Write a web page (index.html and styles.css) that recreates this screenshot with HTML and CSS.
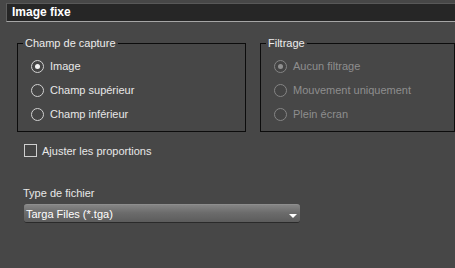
FILE: index.html
```html
<!DOCTYPE html>
<html lang="fr">
<head>
    <meta charset="UTF-8">
    <title>Image fixe</title>
    <link rel="stylesheet" href="styles.css">
</head>
<body>
    <div class="header">Image fixe</div>

    <div class="groups">
        <fieldset class="group group-capture">
            <legend>Champ de capture</legend>
            <div class="option"><span class="radio checked"></span>Image</div>
            <div class="option"><span class="radio"></span>Champ supérieur</div>
            <div class="option"><span class="radio"></span>Champ inférieur</div>
        </fieldset>

        <fieldset class="group group-filter">
            <legend>Filtrage</legend>
            <div class="option disabled"><span class="radio checked"></span>Aucun filtrage</div>
            <div class="option disabled"><span class="radio"></span>Mouvement uniquement</div>
            <div class="option disabled"><span class="radio"></span>Plein écran</div>
        </fieldset>
    </div>

    <div class="check-row"><span class="checkbox"></span>Ajuster les proportions</div>

    <div class="field-label">Type de fichier</div>
    <div class="select">
        <span class="select-text">Targa Files (*.tga)</span>
        <span class="select-arrow"></span>
    </div>
</body>
</html>
```

FILE: styles.css
```css
* {
    box-sizing: border-box;
}

body {
    margin: 0;
    background: #474747;
    font-family: "Liberation Sans", Arial, sans-serif;
    font-size: 11px;
    color: #e8e8e8;
    height: 268px;
    overflow: hidden;
}

.header {
    margin: 3px 0 0 6px;
    height: 19px;
    padding-left: 5px;
    background: #262626;
    border-top: 1px solid #585858;
    border-left: 1px solid #5e5e5e;
    border-bottom: 1px solid #a6a6a6;
    color: #fff;
    font-weight: bold;
    font-size: 12px;
    line-height: 17px;
}

.groups {
    display: flex;
    margin-top: 15px;
    padding-left: 17px;
}

.group {
    margin: 0;
    padding: 4px 5px 5px 5px;
    border: 1px solid #0c0c0c;
    min-width: 0;
}

.group-capture {
    width: 229px;
    margin-right: 14px;
}

.group-filter {
    flex: 1;
}

.group legend {
    padding: 0 2px;
    line-height: 13px;
    color: #ececec;
}

.option {
    display: flex;
    align-items: center;
    height: 24px;
    padding-left: 8px;
}

.radio {
    width: 13px;
    height: 13px;
    border: 1px solid #d2d2d2;
    border-radius: 50%;
    margin-right: 6px;
    display: flex;
    align-items: center;
    justify-content: center;
    background: #444;
}

.radio.checked::after {
    content: "";
    width: 5px;
    height: 5px;
    border-radius: 50%;
    background: #f2f2f2;
}

.option.disabled {
    color: #8e8e8e;
}

.option.disabled .radio {
    border-color: #858585;
}

.option.disabled .radio.checked::after {
    background: #909090;
}

.check-row {
    display: flex;
    align-items: center;
    height: 13px;
    margin-top: 12px;
    padding-left: 24px;
}

.checkbox {
    width: 13px;
    height: 13px;
    border: 1px solid #cfcfcf;
    background: #444;
    margin-right: 5px;
}

.field-label {
    margin-top: 30px;
    padding-left: 23px;
    line-height: 13px;
}

.select {
    display: flex;
    align-items: center;
    justify-content: space-between;
    width: 276px;
    height: 19px;
    margin: 4px 0 0 24px;
    padding: 0 3px 0 2px;
    border-radius: 3px;
    background: linear-gradient(#858585, #6c6c6c 45%, #5c5c5c);
    border-top: 1px solid #8e8e8e;
    border-bottom: 1px solid #2a2a2a;
    color: #fff;
}

.select-arrow {
    width: 0;
    height: 0;
    margin-top: 4px;
    border-left: 4px solid transparent;
    border-right: 4px solid transparent;
    border-top: 4px solid #fff;
}
```
